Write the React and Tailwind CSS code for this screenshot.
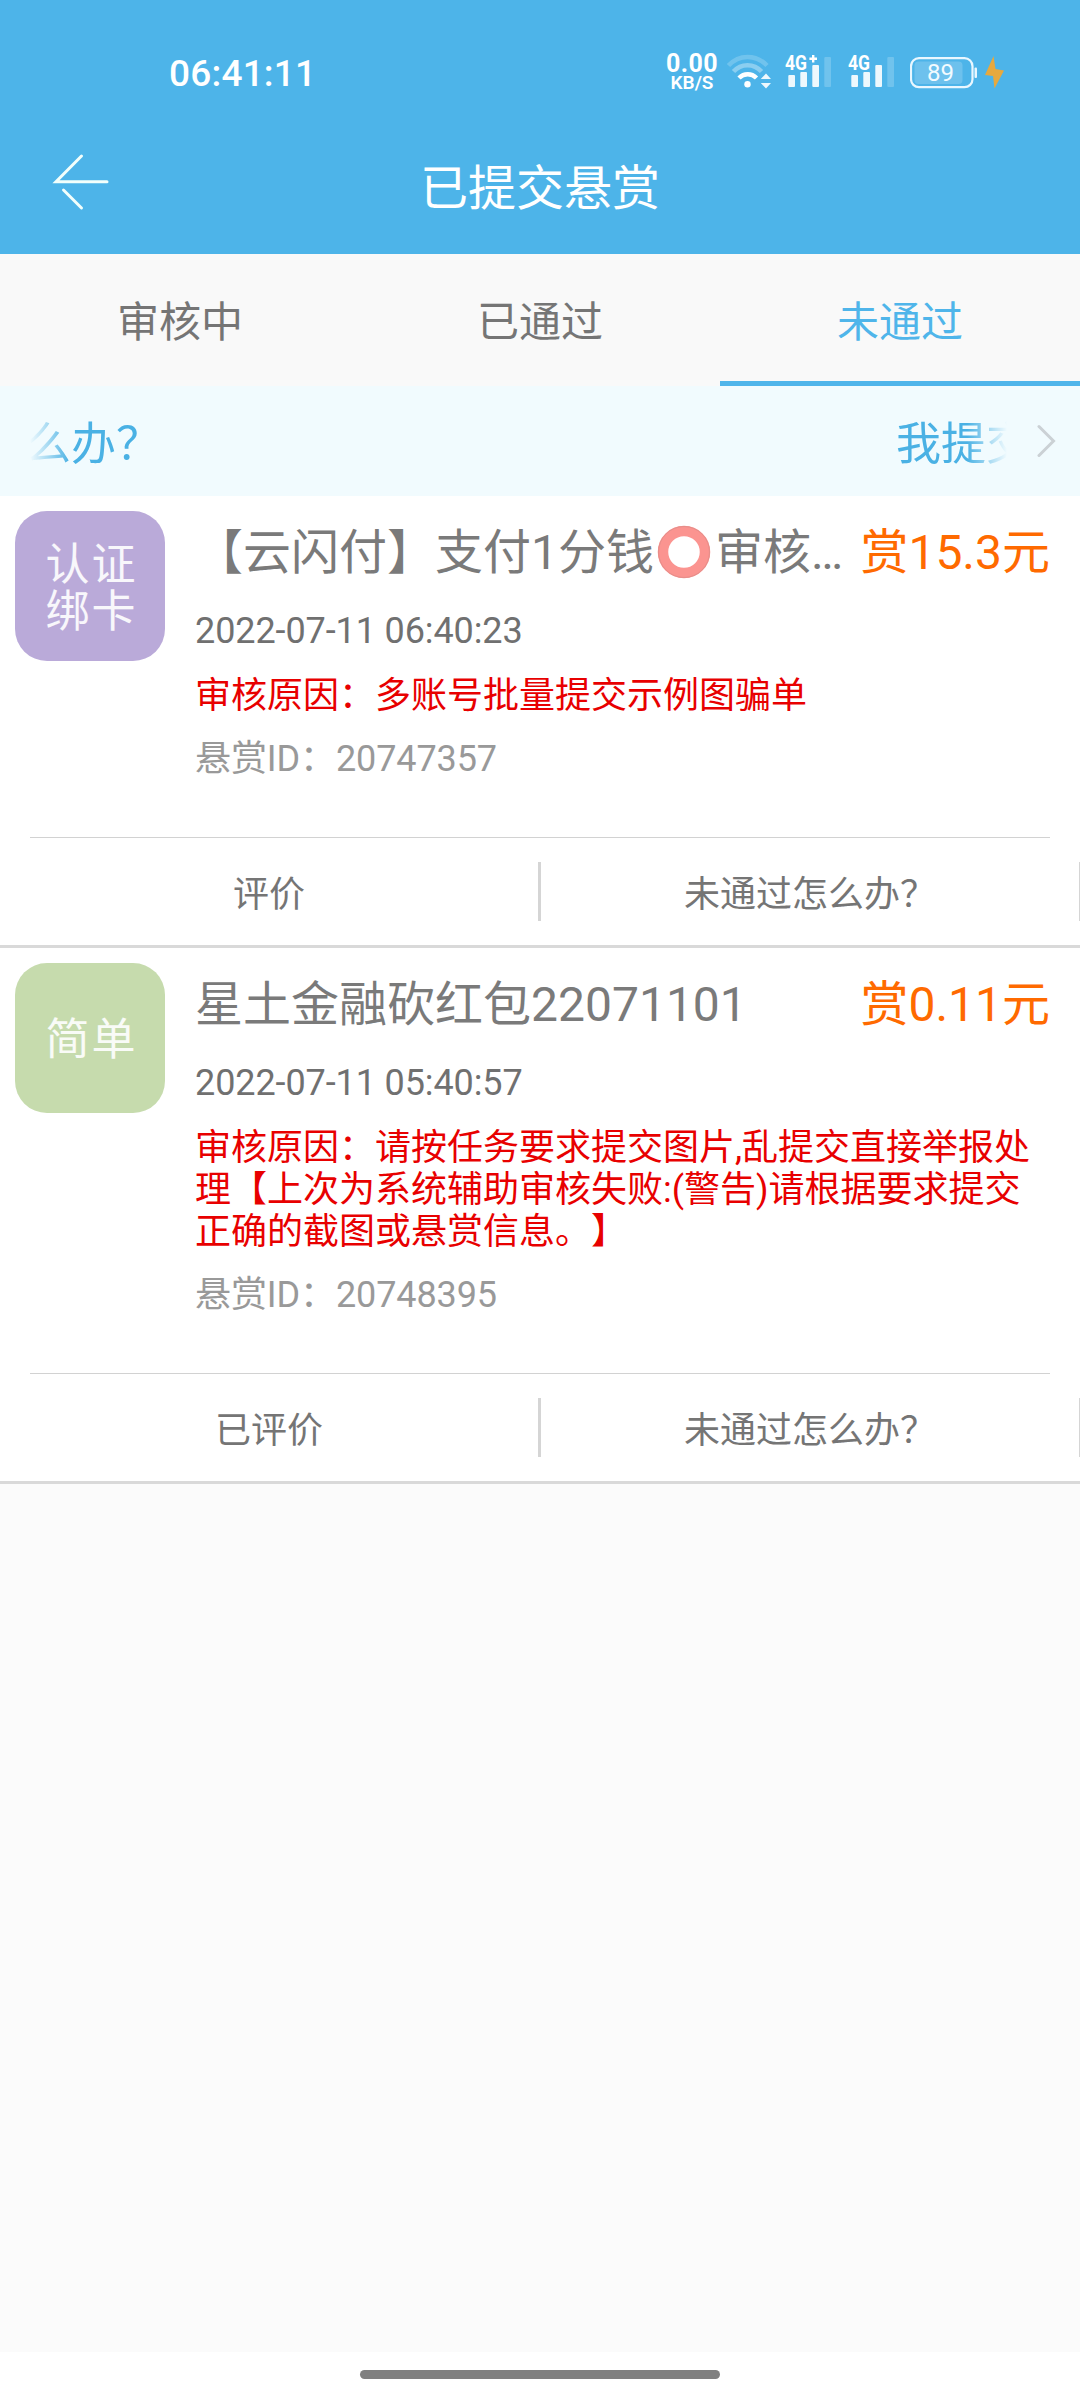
import React from 'react';
import clsx from 'clsx';

const tabs = [
    { key: 'pending', label: '审核中' },
    { key: 'passed', label: '已通过' },
    { key: 'rejected', label: '未通过' }
];

const tasks = [
    {
        id: '20747357',
        badge: ['认证', '绑卡'],
        badgeColor: 'bg-[#baaad9]',
        title: (
            <>
                【云闪付】支付1分钱
                <RedCircle />
                审核…
            </>
        ),
        reward: '赏15.3元',
        time: '2022-07-11 06:40:23',
        reason: ['审核原因：多账号批量提交示例图骗单'],
        rateLabel: '评价'
    },
    {
        id: '20748395',
        badge: ['简单'],
        badgeColor: 'bg-[#c6dbad]',
        title: '星土金融砍红包22071101',
        reward: '赏0.11元',
        time: '2022-07-11 05:40:57',
        reason: [
            '审核原因：请按任务要求提交图片,乱提交直接举报处',
            '理【上次为系统辅助审核失败:(警告)请根据要求提交',
            '正确的截图或悬赏信息。】'
        ],
        rateLabel: '已评价'
    }
];

function RedCircle() {
    return (
        <svg className="inline-block w-[61px] h-[54px] align-[-10px]" viewBox="0 0 61 54" fill="none">
            <circle cx="30" cy="27" r="21" stroke="#fb9490" strokeWidth="10.5" />
            <circle cx="30" cy="27" r="25.5" stroke="#e58e8a" strokeWidth="1" />
        </svg>
    );
}

const WifiIcon = () => (
    <svg className="w-[44px] h-[40px]" viewBox="0 0 44 40" fill="none" stroke="#fff">
        <path d="M1.5 13.5C12 2 29 2 40 13.5" strokeWidth="4.5" opacity="0.2" />
        <path d="M6.5 19.5C14 11 27 11 34.5 19.5" strokeWidth="4.5" opacity="0.35" />
        <path d="M12 26c5-5 12.5-5 17.5 0" strokeWidth="4.5" />
        <circle cx="20.5" cy="32.3" r="3.2" fill="#fff" stroke="none" />
        <path d="M33.8 27l5.2-5.5 5 5.5zM33.8 31l5.2 5.5 5-5.5z" fill="#fff" stroke="none" opacity="0.9" />
    </svg>
);

const SignalIcon = ({ plus }) => (
    <svg className="w-[48px] h-[40px]" viewBox="0 0 48 40" fill="#fff">
        <text x="0" y="18" fontSize="20" fontWeight="700" textLength="22" lengthAdjust="spacingAndGlyphs">4G</text>
        {plus && <path d="M27 3h2.4v2.6h2.6v2.4h-2.6v2.6h-2.4V8h-2.6V5.6H27z" />}
        <rect x="3.3" y="23" width="6.7" height="12" rx="1" opacity="0.9" />
        <rect x="15.3" y="20" width="6.7" height="15" rx="1" opacity="0.9" />
        <rect x="27.3" y="13" width="6.7" height="22" rx="1" opacity="0.9" />
        <rect x="39.3" y="5" width="6.7" height="30" rx="1" opacity="0.2" />
    </svg>
);

const BatteryIcon = () => (
    <svg className="w-[68px] h-[40px]" viewBox="0 0 68 40">
        <rect x="1" y="6.2" width="61.5" height="29" rx="8" fill="none" stroke="#e9f7ff" strokeWidth="2.2" />
        <rect x="4.5" y="9.5" width="48" height="22.5" rx="4" fill="#fff" opacity="0.18" />
        <rect x="64.5" y="15.5" width="2.5" height="10.5" rx="1" fill="#e9f7ff" />
        <text x="30.5" y="29" fontSize="24" fontWeight="400" textAnchor="middle" fill="#f2fbff">89</text>
    </svg>
);

const StatusBar = () => (
    <div className="flex h-[120px] items-center justify-between pt-6 pl-[169px] pr-[75px]">
        <span className="pt-[2px] text-[37px] leading-none font-medium tracking-[0.2px]">06:41:11</span>
        <div className="flex items-center">
            <div className="mr-[9px] flex w-[52px] flex-col items-center pt-[2px] font-bold">
                <span className="text-[25px] leading-[20px] tracking-[0.4px]">0.00</span>
                <span className="text-[19px] leading-[18px] font-semibold">KB/S</span>
            </div>
            <WifiIcon />
            <div className="ml-[14px] flex gap-[15px]">
                <SignalIcon plus />
                <SignalIcon />
            </div>
            <div className="ml-[14px]">
                <BatteryIcon />
            </div>
            <svg className="ml-[6px] w-[21px] h-[40px]" viewBox="0 0 21 40" fill="#e6a93f">
                <path d="M9.5 4L1 23l8 1 1.5 12.5L20 18.5l-8.5-1.5z" />
            </svg>
        </div>
    </div>
);

const NavBar = () => (
    <div className="grid h-[134px] grid-cols-[1fr_auto_1fr] items-center">
        <button className="ml-[51px] w-[60px]">
            <svg className="w-[60px] h-[60px] overflow-visible" viewBox="0 0 60 60" fill="none" stroke="#f2fffc" strokeWidth="3" strokeLinecap="round">
                <path d="M56 24.8H5L30.5-1M12.5 33l18 18" />
            </svg>
        </button>
        <h1 className="pt-[4px] text-[48px] leading-none">已提交悬赏</h1>
        <span />
    </div>
);

const Tabs = ({ active }) => (
    <div className="grid h-[132px] grid-cols-3 bg-[#f9f9f9]">
        {tabs.map((tab) => (
            <button
                key={tab.key}
                className={clsx(
                    'border-b-[5px] pt-[9px] text-[42px]',
                    tab.key === active ? 'border-[#4fb5ea] text-[#4fb5ea]' : 'border-transparent text-[#757575]'
                )}
            >
                {tab.label}
            </button>
        ))}
    </div>
);

const Notice = () => (
    <div className="flex h-[110px] items-center bg-[#f1fbfe] pl-[30px]">
        {/* marquee text fades out on both edges */}
        <div className="flex w-[977px] justify-between overflow-hidden whitespace-nowrap pt-[8px] text-[45px] text-[#4ab1e4] mask-[linear-gradient(to_right,transparent,#000_40px,#000_937px,transparent)]">
            <span className="-ml-[4px]">么办？</span>
            <span className="-mr-[24px]">我提交</span>
        </div>
        <svg className="ml-[30px] w-[19px] h-[34px]" viewBox="0 0 19 34" fill="none" stroke="#cbd1d5" strokeWidth="3" strokeLinecap="round">
            <path d="M2 2.5L16.5 17 2 31.5" />
        </svg>
    </div>
);

const TaskCard = ({ task }) => (
    <div className="border-b-[3px] border-[#d9d9d9] bg-white">
        <div className="flex pt-[15px] pl-[15px] pr-[30px]">
            <div
                className={clsx(
                    'flex size-[150px] shrink-0 flex-col items-center justify-center rounded-[32px] pt-[5px] text-[44px] leading-[47px] tracking-[2px] text-white/90',
                    task.badgeColor
                )}
            >
                {task.badge.map((line) => (
                    <span key={line} className="-mr-[3px]">{line}</span>
                ))}
            </div>
            <div className="ml-[30px] flex-1">
                <div className="flex h-[80px] items-center justify-between whitespace-nowrap pt-[4px] text-[48px] leading-[56px]">
                    <h2 className="text-[#7a7a7a]">{task.title}</h2>
                    <span className="text-[#ff6a00]">{task.reward}</span>
                </div>
                <p className="mt-[19px] text-[36px] leading-[42px] tracking-[-0.1px] text-[#707070]">{task.time}</p>
                <div className="mt-[23px] whitespace-nowrap text-[36px] leading-[42px] text-[#e80000]">
                    {task.reason.map((line) => (
                        <p key={line}>{line}</p>
                    ))}
                </div>
                <p className="mt-[21px] text-[36px] leading-[42px] tracking-[-0.1px] text-[#999]">悬赏ID：{task.id}</p>
            </div>
        </div>
        <div className="mx-[30px] mt-[57px] border-t border-[#d2d2d2]" />
        <div className="flex h-[107px] items-center overflow-hidden text-[36px] leading-[42px] text-[#757575]">
            <button className="w-[538px] shrink-0 pt-[7px]">{task.rateLabel}</button>
            <div className="h-[59px] w-[3px] shrink-0 bg-[#d5d5d5]" />
            <button className="w-[538px] shrink-0 pt-[7px]">未通过怎么办？</button>
            <div className="h-[59px] w-[3px] shrink-0 bg-[#d5d5d5]" />
        </div>
    </div>
);

const App = () => {
    return (
        <div
            className="flex h-[2400px] w-[1080px] flex-col overflow-hidden bg-[#fbfbfb] font-[Roboto,'Noto_Sans_CJK_SC',sans-serif] [text-spacing-trim:space-all]"
            lang="zh-CN"
        >
            <header className="bg-[#4db4e9] text-white">
                <StatusBar />
                <NavBar />
            </header>
            <Tabs active="rejected" />
            <Notice />
            <main className="flex-1">
                {tasks.map((task) => (
                    <TaskCard key={task.id} task={task} />
                ))}
            </main>
            <footer className="flex h-[48px] justify-center bg-white pt-[18px]">
                <div className="h-[9px] w-[360px] rounded-full bg-[#808080]" />
            </footer>
        </div>
    );
};

export default App;
